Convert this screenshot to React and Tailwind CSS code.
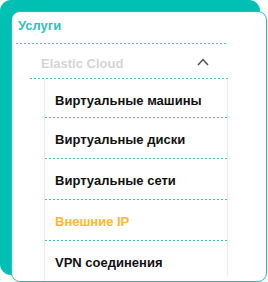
import React from 'react';

const ITEMS = [
  { label: 'Виртуальные машины', first: true },
  { label: 'Виртуальные диски' },
  { label: 'Виртуальные сети' },
  { label: 'Внешние IP', active: true },
  { label: 'VPN соединения' },
];

function Dots({ className = '' }) {
  return (
    <div
      className={`h-px bg-[repeating-linear-gradient(to_right,#3fc6c2_0px,#3fc6c2_2px,transparent_2px,transparent_4px)] ${className}`}
    />
  );
}

export default function App() {
  return (
    <div className="w-[268px] h-[282px] overflow-hidden bg-white font-['Liberation_Sans',Arial,sans-serif]">
      <div className="ml-[11px] mt-[11px] w-[256px] h-[271px] bg-white border border-[#22bfba] rounded-[9px] shadow-[-9px_-9px_0_2px_#00bfb3]">
        <div className="w-[212px] ml-[4px] h-full flex flex-col overflow-hidden rounded-[8px]">
          <div className="pt-[6px] pb-[9px] pl-[2px] text-[13px] leading-[16px] font-bold text-[#2fc1bd]">
            Услуги
          </div>
          <Dots />

          <div className="h-[37px] pt-[12px] pl-[25px] pr-[19px] flex items-start justify-between">
            <span className="text-[13px] leading-[16px] font-bold text-[#d4d4d4]">Elastic Cloud</span>
            <svg width="12" height="8" viewBox="0 0 12 8" className="mt-[2px]">
              <polyline points="1,7 6,1.5 11,7" fill="none" stroke="#505050" strokeWidth="1.5" />
            </svg>
          </div>
          <Dots className="ml-[14px]" />

          <div className="ml-[28px] flex-1 border-l border-r border-[#ececec] flex flex-col">
            {ITEMS.map((item, i) => (
              <div key={item.label}>
                {i > 0 && <Dots />}
                <div
                  className={`${item.first ? 'h-[38px] pt-[14px]' : 'h-[40px] pt-[14px]'} pl-[10px] text-[13px] leading-[16px] font-bold ${
                    item.active ? 'text-[#f9b931]' : 'text-[#111111]'
                  }`}
                >
                  {item.label}
                </div>
              </div>
            ))}
          </div>
        </div>
      </div>
    </div>
  );
}
